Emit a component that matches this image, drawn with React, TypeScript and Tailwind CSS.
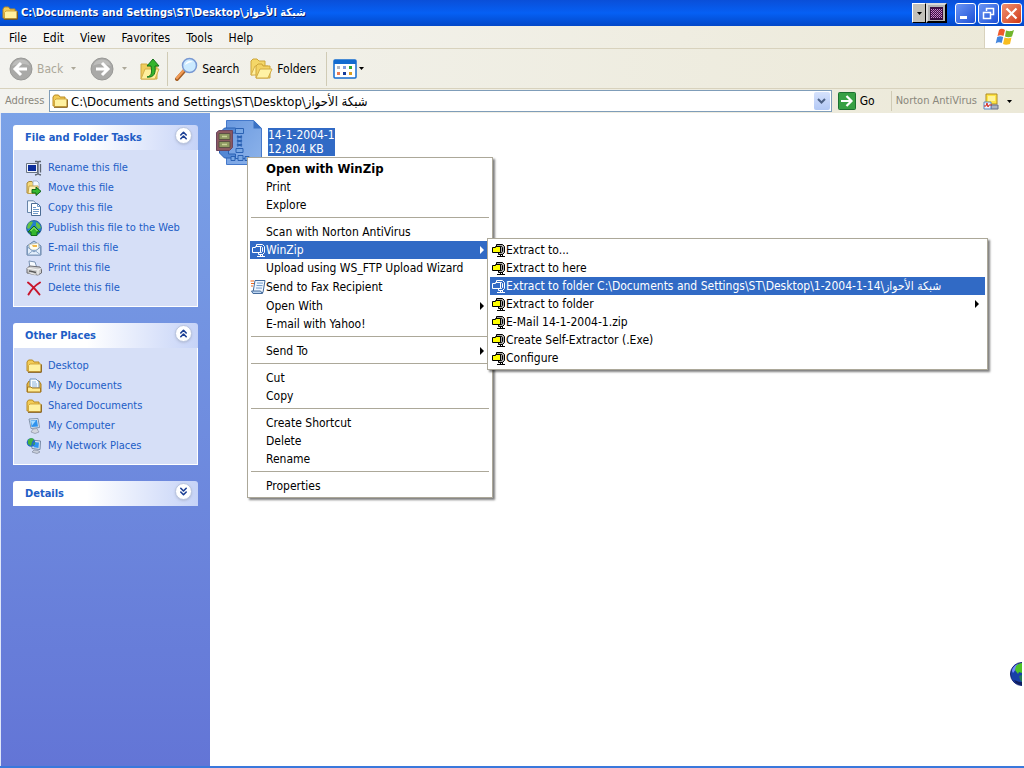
import type { ReactNode } from "react"
import { ChevronsDown, ChevronsUp } from "lucide-react"

const FOLDER_PATH = "C:\\Documents and Settings\\ST\\Desktop\\شبكة الأحواز"

const FolderIcon = ({ className = "size-4" }: { className?: string }) => (
    <svg viewBox="0 0 16 16" className={className} aria-hidden="true">
        <path d="M1 13V4l1.500-2h4L8 4h5v9z" fill="#f2cb57" stroke="#b98a22" />
        <path d="M2.500 13.500V7.500L4 6h11v7.500z" fill="#fff1a0" stroke="#c79a2d" strokeWidth=".8" />
        <path d="M2 14.300h13.300V6.500" fill="none" stroke="#80570c" />
    </svg>
)

const DocsFolderIcon = () => (
    <svg viewBox="0 0 16 16" className="size-4" aria-hidden="true">
        <path d="M1 14V6l2-3h10l2 3v8z" fill="#e8ba45" stroke="#a87a1c" />
        <path d="M4 10V1h6l3 3v6z" fill="#f6fbff" stroke="#7093bd" />
        <path d="M6 4h4M6 6h5M6 8h5" stroke="#8eb4dc" />
        <path d="M1.500 14V9H5l1 1h8.500v4z" fill="#ffeb92" stroke="#a87a1c" />
    </svg>
)

const RenameIcon = () => (
    <svg viewBox="0 0 16 16" className="size-4" aria-hidden="true">
        <path d="M.5 3.500h11v9H.5z" fill="#eef2fa" stroke="#6a7482" />
        <path d="M2 5h8v6H2z" fill="#0b2d9c" />
        <path d="M9 1.500h2l1 1 1-1h2M12 2.500v11M9 15l2-.5 1-1 1 1 2 .5M14.500 4v8.500" fill="none" stroke="#5c6470" strokeWidth="1.300" />
    </svg>
)

const MoveIcon = () => (
    <svg viewBox="0 0 16 16" className="size-4" aria-hidden="true">
        <path d="M1 3l2-1.500h3L7.500 3H12v10H1z" fill="#f5d878" stroke="#a98737" />
        <path d="M7 1h4l2 2v5H7z" fill="#f4f8ff" stroke="#8da3c0" strokeWidth=".7" />
        <path d="M3 6h9v7.500H2z" fill="#fff1b2" stroke="#c3a24d" />
        <path d="M6 9.500h4V7l5 4.300-5 4.200V13H6z" fill="#36b82f" stroke="#11651a" />
    </svg>
)

const CopyIcon = () => (
    <svg viewBox="0 0 16 16" className="size-4" aria-hidden="true">
        <path d="M1.500.8h6l2 2v9.700h-8z" fill="#f2f8ff" stroke="#6684a8" />
        <path d="M5.500 3.500h6l3 3v9h-9z" fill="#fff" stroke="#4b6c94" />
        <path d="M11.500 3.500v3h3M7 7.500h3M7 9.500h6M7 11.500h6M7 13.500h5" fill="none" stroke="#6d99c8" />
    </svg>
)

const PublishIcon = () => (
    <svg viewBox="0 0 16 16" className="size-4" aria-hidden="true">
        <circle cx="8" cy="8" r="7.500" fill="#257fc9" stroke="#174d81" strokeWidth=".7" />
        <path d="M2 4c2-3 4-3 5-2L5 6 3 9 1 8zm8-2c3 1 4 3 5 6l-3 1-2-3z" fill="#63c443" />
        <path d="m8 6 6 6h-3v3.500H5V12H2z" fill="#36b72d" stroke="#116b19" />
        <path d="m4.500 11 3.500-3.500 3.500 3.500" fill="none" stroke="#b1f483" />
    </svg>
)

const MailIcon = () => (
    <svg viewBox="0 0 16 16" className="size-4" aria-hidden="true">
        <path d="m1 6 7-5 7 5v9H1z" fill="#b4cdea" stroke="#6984a6" />
        <path d="M3 4.500 12.500 3l.5 7H4z" fill="#fffdf0" stroke="#b7b7a4" strokeWidth=".7" />
        <path d="M6 5h5v2H7z" fill="#f2ba48" />
        <path d="m1.500 7 6.500 5 6.500-5v8h-13z" fill="#e3eefb" stroke="#7c98bb" />
        <path d="m2 14.500 5-4h2l5 4" fill="none" stroke="#8eabcc" />
    </svg>
)

const PrinterIcon = () => (
    <svg viewBox="0 0 16 16" className="size-4" aria-hidden="true">
        <path d="m4 8-1-7 6 1 2 6z" fill="#f7fbff" stroke="#7c94b4" />
        <path d="m1 8 3-2 10 1 1.500 3v3L12 15l-11-2z" fill="#cfcfcf" stroke="#6d6d72" />
        <path d="m1 8 11 2 3-1.500M12 10v5" fill="none" stroke="#f6f6f6" />
        <path d="m3 11 7 1.500" stroke="#555" strokeWidth="1.500" />
        <path d="m2 13 7 2 2-1-7-2z" fill="#fff" stroke="#999" strokeWidth=".5" />
    </svg>
)

const DeleteIcon = () => (
    <svg viewBox="0 0 16 16" className="size-4" aria-hidden="true">
        <path d="M2 2.500c4 3 8 7.500 11.500 12M14 2.500C9 5.500 5 10 2.500 14.500" fill="none" stroke="#c8152c" strokeWidth="2" strokeLinecap="round" />
    </svg>
)

const ComputerIcon = () => (
    <svg viewBox="0 0 16 16" className="size-4" aria-hidden="true">
        <path d="m3 1 9-.5 1.500 9-8.500 1z" fill="#dce8f4" stroke="#8495ac" />
        <path d="m4.500 2.500 6.500-.5 1 6.500-6.500.5z" fill="#2f93ee" />
        <path d="m5 3 5-.5-4 5z" fill="#a8dcff" />
        <path d="m7 11 4-.5 1 2 1 1.500-4 1.500-4-1.500z" fill="#d4d7df" stroke="#8b91a0" strokeWidth=".7" />
    </svg>
)

const NetworkIcon = () => (
    <svg viewBox="0 0 16 16" className="size-4" aria-hidden="true">
        <path d="m5 2 9.500 1-.5 8.500-8-1z" fill="#dbe7f3" stroke="#7789a5" />
        <path d="m7 4 6 .5-.5 5.500-5-.7z" fill="#3195f0" />
        <circle cx="5" cy="4.500" r="4.300" fill="#246dc1" />
        <path d="M2 2c2-2 4-2 6-1L6 4 5 8 2 6zm5 4 2-2-.5 3z" fill="#48b43c" />
        <path d="m8 12 4 .5 2 1.500-3 1.500-5-1.500z" fill="#c9cfdb" stroke="#828b9d" strokeWidth=".7" />
    </svg>
)

const WinZipIcon = ({ active = false }: { active?: boolean }) => {
    const line = active ? "#fff" : "#000"
    return (
        <svg viewBox="0 0 13 14" className="h-3.5 w-[13px] shrink-0" aria-hidden="true">
            <path d="M4.500 4V1.500h6l2 2v6l-2 2h-4V9.500" fill={active ? "#316ac5" : "#a8a8a8"} stroke={line} />
            <path d="M6 3.500h3.500l1 1v4l-1 1H8" fill="none" stroke={line} />
            <path d="M.5 9.500v-5h3v-1h5v6z" fill={active ? "#316ac5" : "#ffff00"} stroke={line} />
            <path d="M8.500 11v2M10.500 11v2M5 13.500h8" stroke={line} />
        </svg>
    )
}

const FaxIcon = () => (
    <svg viewBox="0 0 16 16" className="size-4 shrink-0" aria-hidden="true">
        <path d="M5 1.500h10l-2 12H3z" fill="#edf5ff" stroke="#466c9c" />
        <path d="m7 4 6 .1M6.500 6.500l6 .1M6 9l6 .1" stroke="#749bc8" />
        <path d="M1.500 12h9l2 2.500H3z" fill="#bcd5f1" stroke="#466c9c" />
        <path d="M.5 2H4M1 4.500h3M1 7h2" stroke="#ef681e" strokeWidth="1.200" />
    </svg>
)

const ArchiveFileIcon = () => (
    <svg viewBox="0 0 48 48" className="size-12 shrink-0" aria-hidden="true">
        <defs>
            <linearGradient id="sheet" x1="0" y1="0" x2="1" y2="1">
                <stop offset="0" stopColor="#6b9ae0" />
                <stop offset="1" stopColor="#8db3ea" />
            </linearGradient>
        </defs>
        <path d="M10.500 1.500h27l8 8v36h-35z" fill="url(#sheet)" stroke="#4579cb" />
        <path d="m37.500 1 8.500 8.500h-8.500z" fill="#3b72c4" />
        <g stroke="#2b62b4">
            <path d="M19.500 11.500V9h-11l-5 5v20l5 5h11v-4h-7V14h7z" fill="#5488d4" />
            <path d="M19.500 9.500h8v5h-8zM20 29.500h7v4h-7zM15 37.500h4v4h-4zM22 36.500h5v5h-5zM29 37.500h4v4h-4z" fill="#79a7e4" />
            <path d="M19 39.500h3m5 0h2" />
            <path d="m21 17 5 2m-5 2 5 2m-5 2 5 2m0-10-5 2m5 2-5 2m5 2-5 2" strokeWidth="1.500" />
        </g>
        <path d="M.5 13.500 3 11.500h13.500v17l-3 3H.5z" fill="#8b5960" stroke="#6b4560" />
        <path d="M3 14.500h11v6H3zm0 8h11v6H3z" fill="#8f9a62" stroke="#5d5046" />
        <path d="M6 17.500h5M6 25.500h5" stroke="#cbd29a" strokeWidth="1.500" />
    </svg>
)

const RoundArrow = ({ flip = false }: { flip?: boolean }) => (
    <svg viewBox="0 0 24 24" className={flip ? "size-6 -scale-x-100" : "size-6"} aria-hidden="true">
        <circle cx="12" cy="12" r="11" fill="#a9a9a7" stroke="#999997" />
        <path d="M3 9a9.500 9.500 0 0 1 18 0c-5-3-12-2-18 0z" fill="#bdbdbb" />
        <path d="m12 6-6 6 6 6M7 12h11" fill="none" stroke="#fff" strokeWidth="3" />
    </svg>
)

const UpFolderIcon = () => (
    <svg viewBox="0 0 22 24" className="h-6 w-[22px]" aria-hidden="true">
        <path d="M2 7h6l2 2h8v13H2z" fill="#f0cd5d" stroke="#d0aa40" />
        <path d="m2 22 4-10h14l-4 10z" fill="#fff09d" stroke="#d4b04a" />
        <path d="M8 20c5-1 5-5 4-11H8l6-7 6 7h-4c1 7-1 12-8 11z" fill="#35b52c" stroke="#147219" />
    </svg>
)

const SearchIcon = () => (
    <svg viewBox="0 0 24 24" className="size-6" aria-hidden="true">
        <path d="m11 13-8 9" stroke="#a45d23" strokeWidth="4" strokeLinecap="round" />
        <path d="m10 13-7 8" stroke="#f19a54" strokeWidth="2.500" strokeLinecap="round" />
        <circle cx="15.500" cy="8.500" r="7" fill="#cbeaff" stroke="#7898d2" strokeWidth="1.500" />
        <path d="M11 8c1-4 5-5 8-3-3 0-5 1-8 3z" fill="#fff" />
    </svg>
)

const FoldersIcon = () => (
    <svg viewBox="0 0 24 24" className="size-6" aria-hidden="true">
        <path d="M2 18V4l2-2h4l2 2h6v12z" fill="#f4d768" stroke="#cda63a" />
        <path d="m2 18 4-9h13l-4 9z" fill="#fff0a0" stroke="#d6b04a" />
        <path d="M7 21V9l2-2h4l1 2h7v12z" fill="#f3d363" stroke="#cda63a" />
        <path d="m7 21 4-9h12l-4 9z" fill="#fff2a4" stroke="#d0aa42" />
    </svg>
)

const ViewsIcon = () => (
    <svg viewBox="0 0 24 20" className="h-5 w-6" aria-hidden="true">
        <rect x="1" y="1" width="22" height="18" rx="1" fill="#fff" stroke="#126bd0" strokeWidth="1.500" />
        <path d="M1 1h22v4H1z" fill="#126bd0" />
        <path d="M4 7h3v3H4z" fill="#b4b8c2" />
        <path d="M10 7h3v3h-3z" fill="#7f9ddf" />
        <path d="M16 7h3v3h-3z" fill="#2fa836" />
        <path d="M4 13h3v3H4z" fill="#ec7b52" />
        <path d="M10 13h3v3h-3z" fill="#153c9d" />
        <path d="M16 13h3v3h-3z" fill="#d99d1f" />
    </svg>
)

const WindowsFlag = () => (
    <svg viewBox="0 0 20 18" className="h-[18px] w-5" aria-hidden="true">
        <path d="M4 2c2-2 4-1 6 0L8.500 8c-2-1-4-1-6 0z" fill="#ef5a2b" />
        <path d="M11 2.500c3 1 5 1 8-.5l-2 6.500c-2 1-5 1-7 0z" fill="#70b52c" />
        <path d="M2.200 9c2-1 4-1 6 0l-1.500 6c-2-1-4-1-6 .5z" fill="#4385dd" />
        <path d="M9.500 9.500c3 1 5 1 7 0L15 16c-3 1-5 1-7 0z" fill="#f8bd20" />
    </svg>
)

const NortonIcon = () => (
    <svg viewBox="0 0 16 17" className="h-[17px] w-4" aria-hidden="true">
        <path d="M3 1h11v10H3z" fill="#ffe545" stroke="#b08b20" />
        <path d="M5 3h7v5H5z" fill="#fff49a" />
        <path d="M8 12h7v4H8z" fill="#aeb4c2" stroke="#656e86" />
        <path d="M1 9h7v7H1z" fill="#e9f2ff" stroke="#5f86bc" />
        <path d="M1 13h2l1-3 1 4 1-2h3" fill="none" stroke="#d8291d" />
    </svg>
)

const GlobeIcon = () => (
    <svg viewBox="0 0 12 24" className="h-6 w-3" aria-hidden="true">
        <circle cx="12" cy="12" r="11.500" fill="#1840a8" stroke="#162372" />
        <path d="M2 9c0-3 3-6 6-7l-2 5-3 4z" fill="#7189ff" />
        <path d="M6 4c2-2 4-3 6-3v10l-3-1-1 2-3-4z" fill="#4ec427" />
        <path d="m9 14 3-1v7l-2-2z" fill="#237e55" />
        <path d="M4 18c2 4 5 5 8 5v-3c-3 0-5-1-8-2z" fill="#101d5c" />
    </svg>
)

const DownArrow = ({ className = "text-black" }: { className?: string }) => (
    <svg viewBox="0 0 5 3" className={`h-[3px] w-[5px] shrink-0 ${className}`} aria-hidden="true">
        <path d="M0 0h5L2.500 3z" fill="currentColor" />
    </svg>
)

const RightArrow = () => (
    <svg viewBox="0 0 4 8" className="h-2 w-1 shrink-0" aria-hidden="true">
        <path d="M0 0v8l4-4z" fill="currentColor" />
    </svg>
)

const menus = ["File", "Edit", "View", "Favorites", "Tools", "Help"]

const fileTasks = [
    { label: "Rename this file", icon: <RenameIcon /> },
    { label: "Move this file", icon: <MoveIcon /> },
    { label: "Copy this file", icon: <CopyIcon /> },
    { label: "Publish this file to the Web", icon: <PublishIcon /> },
    { label: "E-mail this file", icon: <MailIcon /> },
    { label: "Print this file", icon: <PrinterIcon /> },
    { label: "Delete this file", icon: <DeleteIcon /> },
]

const places = [
    { label: "Desktop", icon: <FolderIcon /> },
    { label: "My Documents", icon: <DocsFolderIcon /> },
    { label: "Shared Documents", icon: <FolderIcon /> },
    { label: "My Computer", icon: <ComputerIcon /> },
    { label: "My Network Places", icon: <NetworkIcon /> },
]

const winZipItems = [
    { label: "Extract to..." },
    { label: "Extract to here" },
    { label: `Extract to folder ${FOLDER_PATH}\\14-1-2004-1`, active: true },
    { label: "Extract to folder", more: true },
    { label: "E-Mail 14-1-2004-1.zip" },
    { label: "Create Self-Extractor (.Exe)" },
    { label: "Configure" },
]

type TaskPanelProps = {
    title: string
    items?: { label: string; icon: ReactNode }[]
}

const TaskPanel = ({ title, items }: TaskPanelProps) => {
    const Chevron = items ? ChevronsUp : ChevronsDown
    return (
        <section>
            <button className="flex h-[25px] w-full items-center justify-between rounded-t-[3px] bg-linear-to-r from-white from-40% to-[#c6d3f7] pt-0.5 pr-1.5 pl-3 text-left text-[11px] font-bold text-[#215dc6]">
                {title}
                <span className="mb-1.5 flex size-[17px] items-center justify-center rounded-full border border-[#b8c4df] bg-white text-[#1c3f94] shadow-sm">
                    <Chevron size={13} strokeWidth={3} />
                </span>
            </button>
            {items && (
                <ul className="border border-t-0 border-white bg-[#d6dff7] py-2 pl-3">
                    {items.map((item) => (
                        <li key={item.label}>
                            <a href="#" className="flex h-5 items-center gap-1.5 text-[11px] whitespace-nowrap text-[#215dc6]">
                                {item.icon}
                                {item.label}
                            </a>
                        </li>
                    ))}
                </ul>
            )}
        </section>
    )
}

type MenuItemProps = {
    label: string
    icon?: ReactNode
    bold?: boolean
    active?: boolean
    more?: boolean
    tall?: boolean
    children?: ReactNode
}

const MenuItem = ({ label, icon, bold, active, more, tall, children }: MenuItemProps) => (
    <li role="none" className="relative">
        <button
            role="menuitem"
            className={`flex w-full items-center pr-1.5 text-left whitespace-nowrap ${tall ? "h-5" : "h-[18px]"} ${
                active ? "bg-[#316ac5] text-white" : "text-black"
            } ${bold ? "text-[13px] font-bold" : ""}`}
        >
            <span className="flex w-4 shrink-0 justify-center">{icon}</span>
            <span className="flex-1">{label}</span>
            {more && <RightArrow />}
        </button>
        {children}
    </li>
)

const Separator = () => (
    <li role="separator" className="px-px pt-[3px] pb-[5px]">
        <div className="h-px bg-[#aca899]" />
    </li>
)

const ContextMenu = () => (
    <ul role="menu" className="absolute top-11 left-[37px] w-[246px] border border-[#aca899] bg-white p-0.5 text-[12px] shadow-[2px_2px_2px_#00000080]">
        <MenuItem label="Open with WinZip" bold />
        <MenuItem label="Print" />
        <MenuItem label="Explore" />
        <Separator />
        <MenuItem label="Scan with Norton AntiVirus" />
        <MenuItem label="WinZip" icon={<WinZipIcon active />} active more>
            <ul role="menu" className="absolute -top-[3px] left-[237px] z-10 w-[501px] border border-[#aca899] bg-white p-0.5 shadow-[2px_2px_2px_#00000080]">
                {winZipItems.map((item) => (
                    <MenuItem key={item.label} {...item} icon={<WinZipIcon active={item.active} />} />
                ))}
            </ul>
        </MenuItem>
        <MenuItem label="Upload using WS_FTP Upload Wizard" />
        <MenuItem label="Send to Fax Recipient" icon={<FaxIcon />} tall />
        <MenuItem label="Open With" more />
        <MenuItem label="E-mail with Yahoo!" />
        <Separator />
        <MenuItem label="Send To" more />
        <Separator />
        <MenuItem label="Cut" />
        <MenuItem label="Copy" />
        <Separator />
        <MenuItem label="Create Shortcut" />
        <MenuItem label="Delete" />
        <MenuItem label="Rename" />
        <Separator />
        <MenuItem label="Properties" />
    </ul>
)

const TitleBar = () => (
    <header className="flex h-[26px] items-center bg-linear-to-b from-[#0a4fd8] via-[#0560f5] to-[#0348c8] pr-0.5 pl-0.5 text-white">
        <FolderIcon />
        <h1 className="ml-[3px] flex-1 text-[11px] font-bold whitespace-nowrap [text-shadow:1px_1px_#0a1f70]">{FOLDER_PATH}</h1>
        <div className="flex h-5 items-stretch">
            <button aria-label="Options" className="flex w-3.5 items-center justify-center border border-t-white border-r-black border-b-black border-l-white bg-[#c3c1ba]">
                <DownArrow />
            </button>
            <button aria-label="Keyboard" className="flex w-[21px] items-center justify-center border-2 border-t-[#d8d8d8] border-r-black border-b-black border-l-[#d8d8d8] bg-[#b4b4b4]">
                <svg viewBox="0 0 13 13" className="size-[13px]" shapeRendering="crispEdges" aria-hidden="true">
                    <path d="M0 0h13v13H0z" fill="#3e0f42" />
                    <path d="M1 2.500h11M1 4.500h11M1 6.500h11M1 8.500h11M1 10.500h11" stroke="#d28ad2" strokeDasharray="1 1" />
                    <path d="M2 3.500h10M2 5.500h10M2 7.500h10M2 9.500h10" stroke="#b46ab4" strokeDasharray="1 1" />
                </svg>
            </button>
        </div>
        <div className="ml-2 flex gap-0.5">
            <button aria-label="Minimize" className="size-[21px] rounded-[3px] border border-white bg-linear-to-br from-[#6b94f4] to-[#1d4fd6]">
                <svg viewBox="0 0 19 19" aria-hidden="true">
                    <path d="M4 12h7v3H4z" fill="#fff" />
                </svg>
            </button>
            <button aria-label="Restore" className="size-[21px] rounded-[3px] border border-white bg-linear-to-br from-[#6b94f4] to-[#1d4fd6]">
                <svg viewBox="0 0 19 19" aria-hidden="true">
                    <path d="M7.500 7V4.500h7v6H12M4.500 8.500h7v6h-7zM4 8.500h8M7 4.500h8" fill="none" stroke="#fff" strokeWidth="1.500" />
                </svg>
            </button>
            <button aria-label="Close" className="size-[21px] rounded-[3px] border border-white bg-linear-to-br from-[#f09070] to-[#cf3610]">
                <svg viewBox="0 0 19 19" aria-hidden="true">
                    <path d="m4.500 4.500 10 10m0-10-10 10" stroke="#fff" strokeWidth="2.200" />
                </svg>
            </button>
        </div>
    </header>
)

const App = () => {
    return (
        <div className="flex min-h-screen flex-col overflow-hidden bg-white font-['DejaVu_Sans_Condensed','DejaVu_Sans',sans-serif] text-[12px] text-black">
            <TitleBar />

            <nav className="flex h-[23px] items-stretch border-b border-[#d8d2bd] bg-linear-to-r from-[#f5f5f3] to-[#ece9d8] pl-px">
                {menus.map((menu) => (
                    <button key={menu} className="px-2 pt-0.5">
                        {menu}
                    </button>
                ))}
                <div className="ml-auto flex w-10 items-center justify-center border-l border-[#d8d2bd] bg-white">
                    <WindowsFlag />
                </div>
            </nav>

            {/* Toolbar */}
            <div className="flex h-10 items-center border-b border-[#d8d2bd] bg-linear-to-r from-[#f3f3ef] to-[#ece9d8] pl-[9px]">
                <button className="flex items-center gap-1 text-[#aca899]">
                    <RoundArrow />
                    Back
                </button>
                <DownArrow className="ml-2 text-[#aca899]" />
                <button aria-label="Forward" className="ml-3.5">
                    <RoundArrow flip />
                </button>
                <DownArrow className="ml-2 text-[#aca899]" />
                <button aria-label="Up" className="ml-3">
                    <UpFolderIcon />
                </button>
                <div className="ml-1.5 h-[34px] w-px bg-[#d0cbb5]" />
                <button className="ml-1.5 flex items-center gap-1">
                    <SearchIcon />
                    Search
                </button>
                <button className="ml-2.5 flex items-center gap-1">
                    <FoldersIcon />
                    Folders
                </button>
                <div className="ml-2.5 h-[34px] w-px bg-[#d0cbb5]" />
                <button aria-label="Views" className="ml-1.5 flex items-center gap-0.5">
                    <ViewsIcon />
                    <DownArrow />
                </button>
            </div>

            {/* Address bar */}
            <div className="flex h-6 items-center bg-linear-to-r from-[#f3f3ef] to-[#ece9d8] pl-[5px]">
                <label htmlFor="address" className="w-11 text-[11px] text-[#8a877c]">
                    Address
                </label>
                <div className="flex h-[22px] flex-1 items-center border border-[#7f9db9] bg-white pr-px pl-0.5">
                    <FolderIcon />
                    <input id="address" defaultValue={FOLDER_PATH} className="ml-[3px] min-w-0 flex-1 pt-0.5 text-[13px] outline-none" />
                    <button aria-label="Show addresses" className="flex h-[18px] w-4 items-center justify-center rounded-[2px] bg-linear-to-b from-[#d6e2fc] to-[#b2c8f5]">
                        <svg viewBox="0 0 9 6" className="h-1.5 w-[9px]" aria-hidden="true">
                            <path d="m1 1 3.500 3.500L8 1" fill="none" stroke="#4d6185" strokeWidth="2" />
                        </svg>
                    </button>
                </div>
                <button className="ml-1.5 flex items-center gap-1">
                    <svg viewBox="0 0 18 18" className="size-[18px]" aria-hidden="true">
                        <rect x=".5" y=".5" width="17" height="17" rx="1" fill="#37a044" stroke="#1d7030" />
                        <path d="M3 9h10M8.500 4l5 5-5 5" fill="none" stroke="#fff" strokeWidth="2.200" />
                    </svg>
                    Go
                </button>
                <div className="ml-4 h-5 w-px bg-[#d0cbb5]" />
                <button className="flex items-center pr-3 pl-1 text-[11px] text-[#8a877c]">
                    <span className="mr-1.5">Norton AntiVirus</span>
                    <NortonIcon />
                    <DownArrow className="ml-2 text-black" />
                </button>
            </div>

            <div className="flex flex-1 border-b-2 border-[#3a78dc]">
                <aside className="flex w-[210px] shrink-0 flex-col gap-4 border-l border-[#dfe6f8] bg-linear-to-b from-[#7ba2e7] to-[#6375d6] px-3 pt-3">
                    <TaskPanel title="File and Folder Tasks" items={fileTasks} />
                    <TaskPanel title="Other Places" items={places} />
                    <TaskPanel title="Details" />
                </aside>

                <main className="relative flex-1 p-1.5">
                    <div className="flex items-start">
                        <ArchiveFileIcon />
                        <div className="mt-[9px] ml-1 bg-[#316ac5] leading-[14px] text-white">
                            <p>14-1-2004-1</p>
                            <p>12,804 KB</p>
                        </div>
                    </div>
                    <ContextMenu />
                    <div className="absolute right-0.5 bottom-20">
                        <GlobeIcon />
                    </div>
                </main>
            </div>
        </div>
    )
}

export default App
